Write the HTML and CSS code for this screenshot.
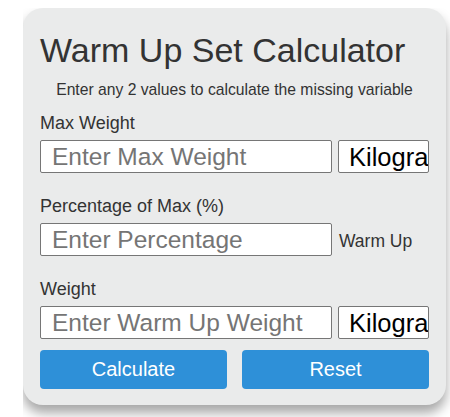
FILE: index.html
```html
<!DOCTYPE html>
<html>
<head>
<meta charset="utf-8">
<link rel="stylesheet" href="styles.css">
</head>
<body>
<div class="clip">
  <div class="card">
    <h1 class="title">Warm Up Set Calculator</h1>
    <p class="subtitle">Enter any 2 values to calculate the missing variable</p>
    <div class="field">
      <label class="label">Max Weight</label>
      <div class="row">
        <input class="input" type="text" placeholder="Enter Max Weight">
        <select class="unit"><option>Kilograms</option></select>
      </div>
    </div>
    <div class="field">
      <label class="label">Percentage of Max (%)</label>
      <div class="row">
        <input class="input" type="text" placeholder="Enter Percentage">
        <span class="note">Warm Up</span>
      </div>
    </div>
    <div class="field">
      <label class="label">Weight</label>
      <div class="row">
        <input class="input" type="text" placeholder="Enter Warm Up Weight">
        <select class="unit"><option>Kilograms</option></select>
      </div>
    </div>
    <div class="buttons">
      <button class="btn">Calculate</button>
      <button class="btn">Reset</button>
    </div>
  </div>
</div>
</body>
</html>
```
FILE: styles.css
```css
* { box-sizing: border-box; }
html, body { margin: 0; padding: 0; background: #fff; }
body { font-family: "Liberation Sans", Arial, sans-serif; color: #333; }
.clip {
  margin-left: 23px;
  margin-top: 8px;
  width: 427px;
  height: 409px;
  overflow: hidden;
}
.card {
  width: 423px;
  background: #eaebeb;
  border-radius: 20px;
  padding: 22px 17px 16px 17px;
  box-shadow: 0 8px 12px rgba(0, 0, 0, 0.35);
}
.title {
  margin: 0;
  font-size: 34px;
  line-height: 40px;
  font-weight: normal;
  color: #333;
}
.subtitle {
  margin: 10px 0 0 0;
  font-size: 15.7px;
  line-height: 20px;
  text-align: center;
}
.field {
  display: flex;
  flex-direction: column;
  gap: 6px;
  margin-top: 12px;
}
.field + .field { margin-top: 22px; }
.label {
  font-size: 18px;
  line-height: 22px;
}
.row {
  display: flex;
  align-items: center;
  gap: 6px;
}
.input {
  width: 292px;
  height: 33px;
  border: 1px solid #767676;
  border-radius: 2px;
  padding: 0 11px;
  font-family: "Liberation Sans", Arial, sans-serif;
  font-size: 24.5px;
  color: #000;
  background: #fff;
  margin: 0;
}
.input::placeholder { color: #757575; }
.unit {
  -webkit-appearance: none;
  appearance: none;
  width: 91px;
  height: 33px;
  border: 1px solid #767676;
  border-radius: 2px;
  padding: 0 0 0 10px;
  font-family: "Liberation Sans", Arial, sans-serif;
  font-size: 25.5px;
  color: #000;
  background: #fff;
  margin: 0;
}
.note {
  font-size: 17.5px;
  line-height: 22px;
  margin-left: 1px;
  padding-top: 3px;
}
.buttons {
  display: flex;
  gap: 15px;
  margin-top: 11px;
}
.btn {
  flex: 1;
  height: 39px;
  border: none;
  border-radius: 4px;
  background: #2e90d8;
  color: #fff;
  font-family: "Liberation Sans", Arial, sans-serif;
  font-size: 20px;
  padding: 0;
}
```
